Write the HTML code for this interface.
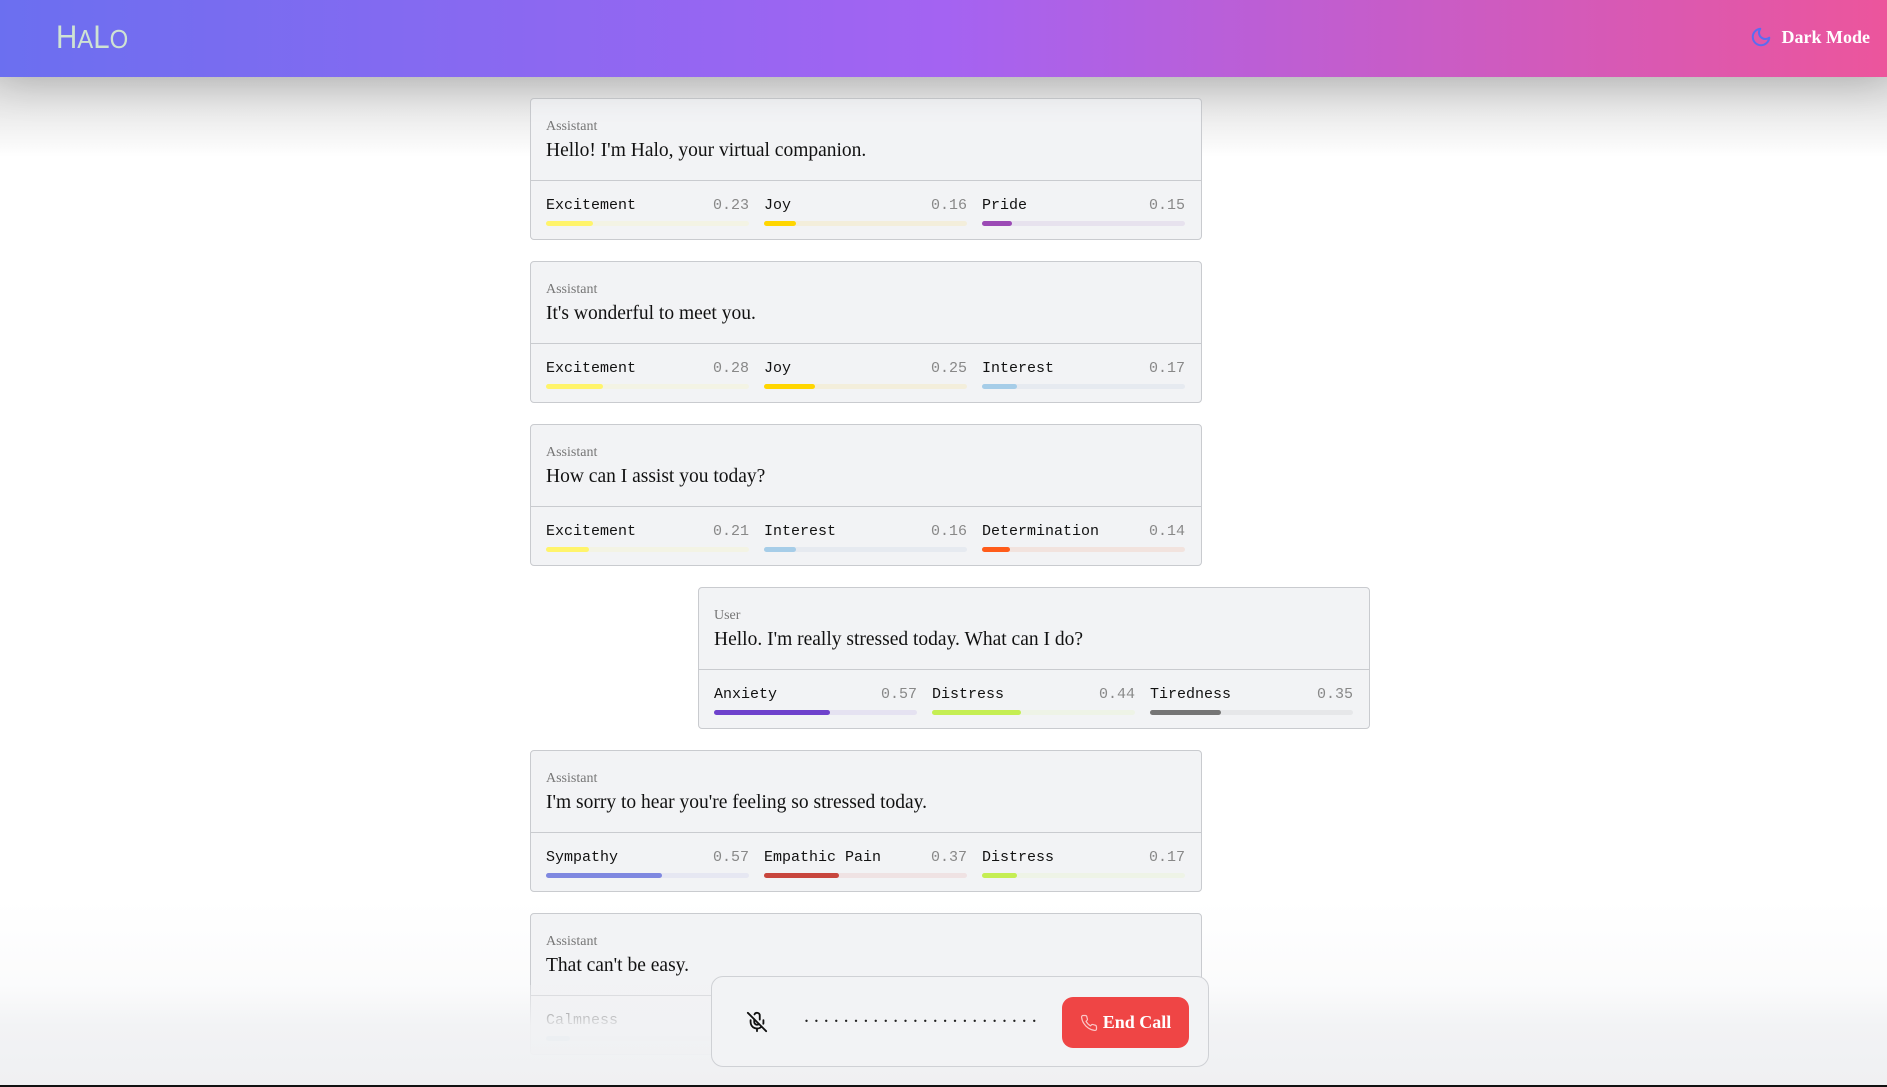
<!DOCTYPE html>
<html><head><meta charset="utf-8"><style>
*{box-sizing:border-box;margin:0;padding:0}
body{width:1887px;height:1087px;overflow:hidden;background:#fff;position:relative;font-family:"Liberation Serif",serif}
.hdr{position:absolute;left:0;top:0;width:1887px;height:77px;background:linear-gradient(90deg,#6b6ff0 0%,#a463f2 50%,#ec559c 100%);z-index:5;box-shadow:0 6px 40px rgba(0,0,0,0.18)}
.logo{position:absolute;left:56px;top:19px;font-family:"Liberation Sans",sans-serif;font-size:32px;letter-spacing:0px;color:#cfe3d3;font-weight:400;transform:scaleX(0.92);transform-origin:left}
.logo small{font-size:26px}
.dm{position:absolute;right:17px;top:26px;color:#fff;font-weight:bold;font-size:18px;display:flex;align-items:center;gap:10px}
.topfade{position:absolute;left:0;top:77px;width:1887px;height:80px;background:linear-gradient(#dadada,rgba(255,255,255,0));z-index:1}
.card{position:absolute;width:672px;height:142px;background:#f2f3f5;border:1px solid #c9cbcf;border-radius:4px;z-index:2}
.role{position:absolute;left:15px;top:20px;font-size:14px;color:#777}
.msg{position:absolute;left:15px;top:41px;font-size:19.5px;color:#111}
.div{position:absolute;left:0;right:0;top:81px;border-top:1px solid #c9cbcf}
.em{position:absolute;top:98px;width:203px;font-family:"Liberation Mono",monospace;font-size:15px;color:#111}
.em .v{position:absolute;right:0;top:0;color:#888}
.bar{position:absolute;left:0;top:24px;width:203px;height:5px;border-radius:3px}
.bar i{display:block;height:5px;border-radius:3px}
.fade{position:absolute;left:0;top:985px;width:1887px;height:102px;background:linear-gradient(rgba(241,242,244,0.3),rgba(241,242,244,0.92) 40%,#eff0f2);z-index:3}
.fade2{position:absolute;left:0;top:900px;width:1887px;height:85px;background:linear-gradient(rgba(255,255,255,0),rgba(241,242,244,0.3));z-index:1}
.ctrl{position:absolute;left:711px;top:976px;width:498px;height:91px;background:#f2f3f5;border:1px solid #cfd1d5;border-radius:12px;z-index:4}
.dots{position:absolute;left:92px;top:28px;font-size:20px;letter-spacing:4.9px;color:#222}
.btn{position:absolute;left:350px;top:20px;width:127px;height:51px;background:#ef4545;border-radius:11px;color:#fff;font-size:18px;font-weight:bold;display:flex;align-items:center;justify-content:center;gap:5px}
.line{position:absolute;left:0;top:1085px;width:1887px;height:2px;background:#111;z-index:6}
</style></head><body>
<div class="hdr"><div class="logo">H<small>A</small>L<small>O</small></div>
<div class="dm"><svg width="22" height="22" viewBox="0 0 24 24" fill="none" stroke="#5b6cf0" stroke-width="2.2" stroke-linecap="round" stroke-linejoin="round"><path d="M21 12.8A9 9 0 1 1 11.2 3a7 7 0 0 0 9.8 9.8z"/></svg>Dark Mode</div></div>
<div class="topfade"></div>
<div class="fade2"></div>

<div class="card" style="left:530px;top:98px"><div class="role">Assistant</div><div class="msg">Hello! I'm Halo, your virtual companion.</div><div class="div"></div>
<div class="em" style="left:15px">Excitement<span class="v">0.23</span><div class="bar" style="background:#f3f3e4"><i style="width:23%;background:#fff46b"></i></div></div>
<div class="em" style="left:233px">Joy<span class="v">0.16</span><div class="bar" style="background:#f3eedb"><i style="width:16%;background:#ffd600"></i></div></div>
<div class="em" style="left:451px">Pride<span class="v">0.15</span><div class="bar" style="background:#e7e2ee"><i style="width:15%;background:#9b4ab5"></i></div></div></div>

<div class="card" style="left:530px;top:261px"><div class="role">Assistant</div><div class="msg">It's wonderful to meet you.</div><div class="div"></div>
<div class="em" style="left:15px">Excitement<span class="v">0.28</span><div class="bar" style="background:#f3f3e4"><i style="width:28%;background:#fff46b"></i></div></div>
<div class="em" style="left:233px">Joy<span class="v">0.25</span><div class="bar" style="background:#f3eedb"><i style="width:25%;background:#ffd600"></i></div></div>
<div class="em" style="left:451px">Interest<span class="v">0.17</span><div class="bar" style="background:#e6eaf0"><i style="width:17%;background:#a6cde8"></i></div></div></div>

<div class="card" style="left:530px;top:424px"><div class="role">Assistant</div><div class="msg">How can I assist you today?</div><div class="div"></div>
<div class="em" style="left:15px">Excitement<span class="v">0.21</span><div class="bar" style="background:#f3f3e4"><i style="width:21%;background:#fff46b"></i></div></div>
<div class="em" style="left:233px">Interest<span class="v">0.16</span><div class="bar" style="background:#e6eaf0"><i style="width:16%;background:#a6cde8"></i></div></div>
<div class="em" style="left:451px">Determination<span class="v">0.14</span><div class="bar" style="background:#f2e3de"><i style="width:14%;background:#ff5c1a"></i></div></div></div>

<div class="card" style="left:698px;top:587px"><div class="role">User</div><div class="msg">Hello. I'm really stressed today. What can I do?</div><div class="div"></div>
<div class="em" style="left:15px">Anxiety<span class="v">0.57</span><div class="bar" style="background:#e5e2f1"><i style="width:57%;background:#6e42cc"></i></div></div>
<div class="em" style="left:233px">Distress<span class="v">0.44</span><div class="bar" style="background:#eef3e6"><i style="width:44%;background:#c5ee53"></i></div></div>
<div class="em" style="left:451px">Tiredness<span class="v">0.35</span><div class="bar" style="background:#e6e7e9"><i style="width:35%;background:#757575"></i></div></div></div>

<div class="card" style="left:530px;top:750px"><div class="role">Assistant</div><div class="msg">I'm sorry to hear you're feeling so stressed today.</div><div class="div"></div>
<div class="em" style="left:15px">Sympathy<span class="v">0.57</span><div class="bar" style="background:#e6e7f2"><i style="width:57%;background:#7f88e0"></i></div></div>
<div class="em" style="left:233px">Empathic Pain<span class="v">0.37</span><div class="bar" style="background:#efe2e3"><i style="width:37%;background:#c8463d"></i></div></div>
<div class="em" style="left:451px">Distress<span class="v">0.17</span><div class="bar" style="background:#eef3e6"><i style="width:17%;background:#c5ee53"></i></div></div></div>

<div class="card" style="left:530px;top:913px"><div class="role">Assistant</div><div class="msg">That can't be easy.</div><div class="div"></div>
<div class="em" style="left:15px">Calmness<span class="v">0.09</span><div class="bar" style="background:#e6e8ef"><i style="width:12%;background:#a9cce3"></i></div></div></div>

<div class="fade"></div>
<div class="ctrl">
<svg style="position:absolute;left:34px;top:34px" width="22" height="22" viewBox="0 0 24 24" fill="none" stroke="#111" stroke-width="2" stroke-linecap="round" stroke-linejoin="round"><line x1="2" y1="2" x2="22" y2="22"/><path d="M18.9 13.9A7 7 0 0 0 19 12v-2"/><path d="M5 10v2a7 7 0 0 0 12 5"/><path d="M15 9.3V5a3 3 0 0 0-5.7-1.3"/><path d="M9 9v3a3 3 0 0 0 5.1 2.1"/><line x1="12" y1="19" x2="12" y2="22"/></svg>
<div class="dots">........................</div>
<div class="btn"><svg width="18" height="18" viewBox="0 0 24 24" fill="none" stroke="#fbc7c7" stroke-width="1.6" stroke-linecap="round" stroke-linejoin="round"><path d="M22 16.9v3a2 2 0 0 1-2.2 2 19.8 19.8 0 0 1-8.6-3.1 19.5 19.5 0 0 1-6-6A19.8 19.8 0 0 1 2.1 4.2 2 2 0 0 1 4.1 2h3a2 2 0 0 1 2 1.7c.1.9.4 1.8.7 2.7a2 2 0 0 1-.5 2.1L8 9.8a16 16 0 0 0 6 6l1.3-1.3a2 2 0 0 1 2.1-.4c.9.3 1.8.6 2.7.7a2 2 0 0 1 1.7 2z"/></svg>End Call</div>
</div>
<div class="line"></div>
</body></html>
